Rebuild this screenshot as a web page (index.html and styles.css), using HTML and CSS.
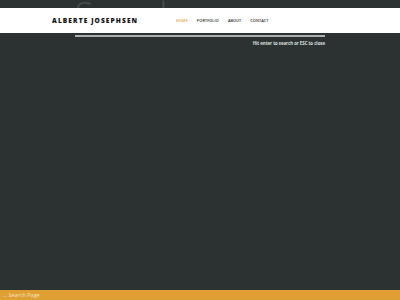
FILE: index.html
```html
<!DOCTYPE html>
<html>
<head>
<meta charset="utf-8">
<link rel="stylesheet" href="styles.css">
</head>
<body>
<div class="search-area">
  <div class="search-field">Search</div>
  <div class="search-hint">Hit enter to search or ESC to close</div>
</div>
<header class="site-header">
  <div class="logo">ALBERTE JOSEPHSEN</div>
  <nav class="nav">
    <a class="nav-item active">HOME</a>
    <a class="nav-item">PORTFOLIO</a>
    <a class="nav-item">ABOUT</a>
    <a class="nav-item">CONTACT</a>
  </nav>
</header>
<div class="page-bar"><span class="arrow">&#8594;</span> Search Page</div>
</body>
</html>
```
FILE: styles.css
```css
html, body {
  margin: 0;
  padding: 0;
  width: 400px;
  height: 300px;
  overflow: hidden;
  background: #2b3231;
  font-family: "Open Sans", "Liberation Sans", sans-serif;
}
.search-area {
  width: 250px;
  margin-left: 75px;
}
.search-field {
  height: 35px;
  border-bottom: 2px solid #a9b0af;
  font-size: 34px;
  line-height: 28px;
  color: #474e4d;
  font-weight: 300;
  overflow: hidden;
}
.search-hint {
  text-align: right;
  font-size: 4.3px;
  line-height: 6px;
  font-weight: 700;
  color: #dde1e0;
  margin-top: 3px;
}
.site-header {
  position: absolute;
  top: 8px;
  left: 0;
  right: 0;
  height: 25px;
  background: #ffffff;
  display: flex;
  align-items: center;
  padding-left: 52px;
}
.logo {
  font-size: 6.6px;
  font-weight: 800;
  letter-spacing: 1.1px;
  color: #111;
  width: 124px;
}
.nav {
  display: flex;
  gap: 9px;
}
.nav-item {
  font-size: 3.8px;
  font-weight: 600;
  color: #222;
  letter-spacing: 0.1px;
}
.nav-item.active {
  color: #e6a23a;
}
.page-bar {
  position: absolute;
  left: 0;
  right: 0;
  bottom: 0;
  height: 10px;
  background: #df9f32;
  color: #f3e2c2;
  font-size: 5.5px;
  line-height: 10px;
  padding-left: 2px;
}
.arrow {
  font-size: 5px;
}
```
